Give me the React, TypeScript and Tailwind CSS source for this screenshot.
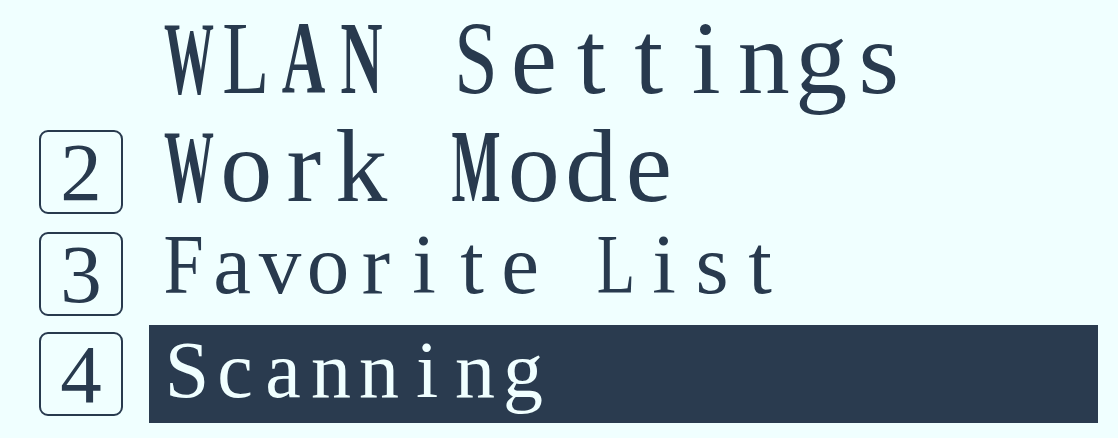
import React from "react";

// wide capitals are squeezed (and thickened) so every glyph fits its fixed-width cell
const SQUEEZE: Record<string, string> = {
  W: "scale-x-[0.48] font-bold",
  M: "scale-x-[0.5] font-bold",
  A: "scale-x-[0.58] font-bold",
  N: "scale-x-[0.56] font-bold",
  L: "scale-x-[0.74]",
  S: "scale-x-[0.75]",
  F: "scale-x-[0.85]",
};

function Mono({ text, cell, plain = false }: { text: string; cell: string; plain?: boolean }) {
  return (
    <span className="flex font-['Liberation_Serif']">
      {Array.from(text).map((ch, i) => (
        <span key={i} className={`${cell} flex shrink-0 justify-center`}>
          <span className={`inline-block whitespace-pre ${plain ? "" : SQUEEZE[ch] ?? ""}`}>
            {ch === " " ? "\u00a0" : ch}
          </span>
        </span>
      ))}
    </span>
  );
}

function Key({ n }: { n: number }) {
  return (
    <div className="flex h-[84px] w-[84px] shrink-0 items-center justify-center rounded-[9px] border-2 border-[#283a4e] font-['Liberation_Serif'] text-[83px] leading-none">
      {n}
    </div>
  );
}

export default function App() {
  return (
    <div className="flex h-[438px] w-[1118px] flex-col overflow-hidden bg-[#f0ffff] pl-[39px] font-['Liberation_Serif'] text-[#283a4e]">
      {/* title */}
      <div className="mt-[6px] flex h-[104px] items-start gap-[26px]">
        <div className="w-[84px] shrink-0" />
        <div className="pl-[11px] text-[104px] leading-[104px]">
          <Mono text="WLAN Settings" cell="w-[57.5px]" />
        </div>
      </div>

      <div className="mt-[20px] flex h-[84px] items-start gap-[26px]">
        <Key n={2} />
        <div className="pl-[11px] text-[104px] leading-[72px]">
          <Mono text="Work Mode" cell="w-[57.5px]" />
        </div>
      </div>

      <div className="mt-[18px] flex h-[84px] items-start gap-[26px]">
        <Key n={3} />
        <div className="pl-[11px] text-[85px] leading-[65px]">
          <Mono text="Favorite List" cell="w-[48px]" />
        </div>
      </div>

      {/* selected entry */}
      <div className="mt-[9px] flex h-[98px] items-center gap-[26px]">
        <Key n={4} />
        <div className="flex h-[98px] w-[949px] items-start bg-[#2a3b4f] pl-[14px] text-[80px] leading-[90px] text-[#f0ffff]">
          <Mono text="Scanning" cell="w-[48px]" plain />
        </div>
      </div>
    </div>
  );
}
